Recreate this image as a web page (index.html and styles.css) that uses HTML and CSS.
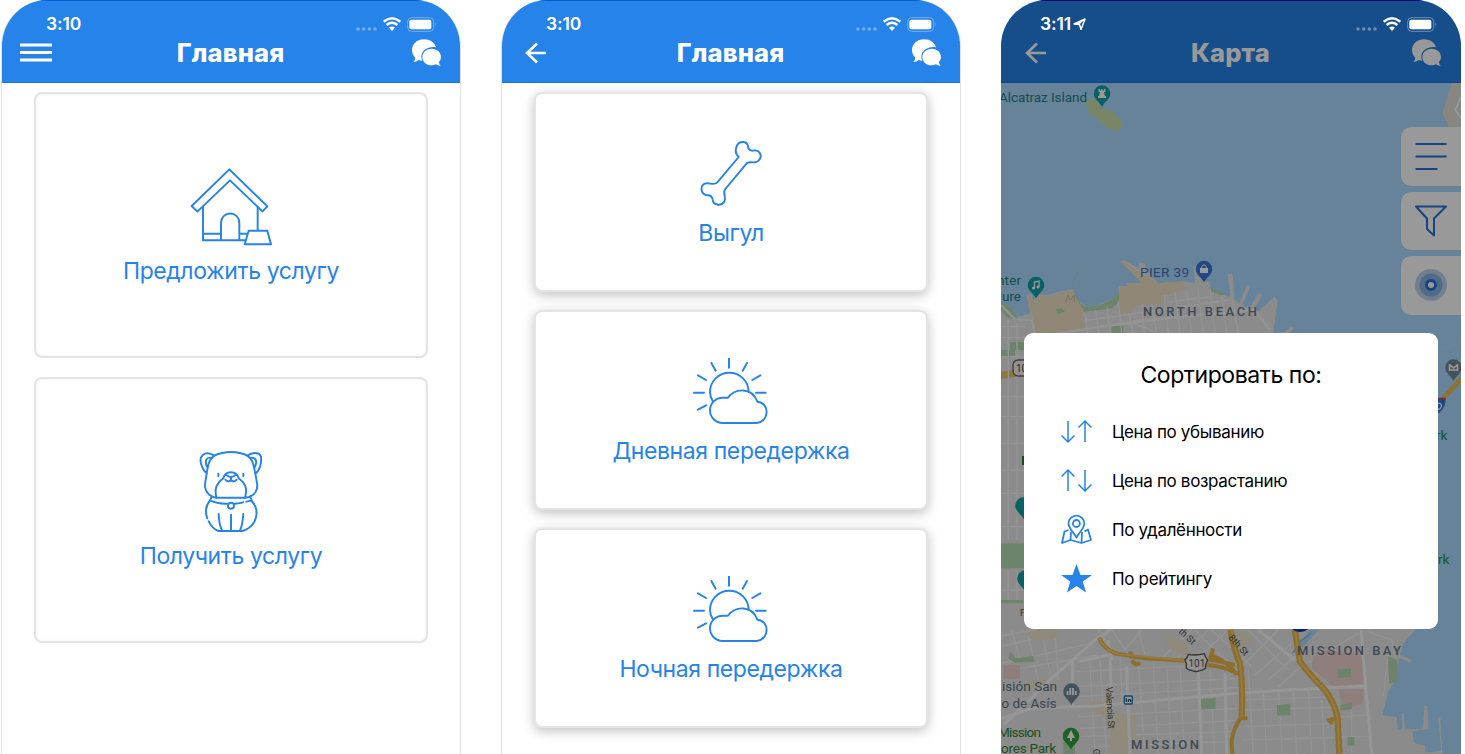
FILE: index.html
```html
<!DOCTYPE html>
<html lang="ru">
<head>
<meta charset="utf-8">
<title>Главная</title>
<link rel="stylesheet" href="styles.css">
</head>
<body>
<svg class="defs" width="0" height="0" aria-hidden="true">
  <symbol id="signal" viewBox="1065 45 246 48">
    <g opacity=".35"><circle cx="1074" cy="84" r="5.5"/><circle cx="1091" cy="84" r="5.5"/><circle cx="1108" cy="84" r="5.5"/><circle cx="1125" cy="84" r="5.5"/></g>
    <g fill="none" stroke="#fff" stroke-width="7.5"><path d="M1151 62Q1176 42 1201 62"/><path d="M1160 72Q1176 59 1192 72"/></g>
    <path d="M1167 80Q1176 73 1185 80L1176 90Z"/>
    <rect x="1223" y="50" width="78" height="41" rx="12" fill="none" stroke="#fff" stroke-opacity=".35" stroke-width="3"/>
    <rect x="1228" y="56" width="66" height="29" rx="6"/>
    <path d="M1305 64Q1310 70 1305 77Z" opacity=".5"/>
  </symbol>
  <symbol id="chat" viewBox="1230 110 100 95">
    <path d="M1272 117C1291 117 1304 127 1308 141C1286 137 1266 149 1264 167C1264 173 1265 177 1267 181Q1262 181 1256 179Q1250 185 1240 185Q1246 179 1246 172Q1236 163 1236 150C1236 131 1252 117 1272 117Z"/>
    <path d="M1295 145C1311 145 1323 156 1323 169Q1323 178 1317 185Q1317 191 1322 196Q1314 197 1308 192Q1302 195 1295 195C1279 195 1267 184 1267 170C1267 156 1279 145 1295 145Z"/>
  </symbol>
  <symbol id="back" viewBox="0 0 22 22"><path d="M21 11H2M12 1.5L2 11L12 20.5" fill="none" stroke="#fff" stroke-width="2.6"/></symbol>
  <symbol id="sun" viewBox="273 39 240 204">
    <path d="M387 40V68M334 54L347 77M441 54L428 77M294 91L318 105M481 91L457 105M282 143H312M468 143H497M294 194L318 181"/>
    <path d="M338 168Q330 155 330 141A58 58 0 0 1 446 141"/>
    <path d="M368 234A38 38 0 0 1 368 158H384C404 130 456 124 472 170C509 172 510 230 470 234Z"/>
  </symbol>
</svg>

<main class="screens">
  <section class="phone">
    <header class="header">
      <div class="status"><span class="time">3:10</span><svg class="signal"><use href="#signal"/></svg></div>
      <div class="nav">
        <svg class="menu" viewBox="0 0 32 20"><path d="M0 2H32M0 9.5H32M0 17H32" stroke="#fff" stroke-width="3"/></svg>
        <h1>Главная</h1>
        <svg class="chat"><use href="#chat"/></svg>
      </div>
    </header>
    <div class="cards">
      <article class="card tall">
        <svg class="icon" viewBox="54 51 258 240">
          <path d="M65 168L178 58L292 169L277 184L180 91L82 185Z"/>
          <path d="M99 172V271H153V218A27.500 27.500 0 0 1 208 218V271H224M99 251H153M208 251H230M263 172V241M153 271H208M236 242H292L303 283H224Z"/>
        </svg>
        <p>Предложить услугу</p>
      </article>
      <article class="card tall">
        <svg class="icon" viewBox="54 51 258 240">
          <path d="M133 62C105 45 82 62 96 95Q101 108 110 115C108 135 104 143 105 155C108 178 127 187 139 188H225C250 185 262 170 262 151Q260 138 256 116C270 106 275 83 273 65C267 49 243 53 232 62Q210 51 183 51Q155 51 133 62Z"/>
          <path d="M127 69C107 64 104 78 111 96M239 69C260 64 262 82 254 97M133 62C116 73 114 92 110 115M232 62C250 74 251 93 256 116"/>
          <path d="M139 188C132 157 142 143 160 130Q164 112 183 112Q201 112 206 130C224 143 234 157 225 188M168 119Q183 133 198 119M183 126V133M166 134Q175 144 183 135Q191 144 200 134M145 116V124M220 116V124"/>
          <path d="M125 185L120 197Q143 207 171 206M194 206Q211 205 220 202M229 200L245 196L240 184"/><circle cx="183" cy="212" r="9"/>
          <path d="M120 197C108 211 105 231 112 250M116 259Q127 281 145 288H218C265 273 269 222 245 198M146 237Q147 270 157 288M183 239V288M220 237Q217 275 209 288"/>
        </svg>
        <p>Получить услугу</p>
      </article>
    </div>
  </section>

  <section class="phone">
    <header class="header">
      <div class="status"><span class="time">3:10</span><svg class="signal"><use href="#signal"/></svg></div>
      <div class="nav">
        <svg class="back"><use href="#back"/></svg>
        <h1>Главная</h1>
        <svg class="chat"><use href="#chat"/></svg>
      </div>
    </header>
    <div class="cards">
      <article class="card short">
        <svg class="icon" viewBox="33 60 240 204"><path d="M176 111C169 104 165 93 169 82C173 62 201 60 204 79Q205 91 218 92C238 87 248 106 238 119C228 134 211 122 200 130L136 207C126 219 141 233 133 245C121 262 99 253 98 239Q95 225 82 226C60 222 59 196 77 190C90 187 101 198 112 187Z"/></svg>
        <p>Выгул</p>
      </article>
      <article class="card short"><svg class="icon"><use href="#sun"/></svg><p>Дневная передержка</p></article>
      <article class="card short"><svg class="icon"><use href="#sun"/></svg><p>Ночная передержка</p></article>
    </div>
  </section>

  <section class="phone map-phone">
    <header class="header">
      <div class="status"><span class="time">3:11</span><svg class="locate" viewBox="0 0 13 12"><path d="M1 6L12 1L8 11.500L6.500 6.500Z" fill="none" stroke="#fff" stroke-width="1.500" stroke-linejoin="round"/><path d="M1 6L12 1L6.500 6.500Z"/></svg><svg class="signal"><use href="#signal"/></svg></div>
      <div class="nav">
        <svg class="back"><use href="#back"/></svg>
        <h1>Карта</h1>
        <svg class="chat"><use href="#chat"/></svg>
      </div>
    </header>
    <div class="map">
      <svg class="map-art" viewBox="1001 83 460 671">
        <defs>
          <path id="pin" d="M0 22C-2 17-8.300 14.500-8.300 8.500A8.300 8.300 0 1 1 8.300 8.500C8.300 14.500 2 17 0 22Z"/>
        </defs>
        <rect x="1001" y="83" width="460" height="671" fill="#aadaff"/>
        <g transform="scale(.33333)">
          <!-- Alcatraz and Treasure Island -->
          <g transform="translate(2985 0)">
            <path d="M270 300L300 298L320 325L350 332L382 366L380 386L360 394L335 382L305 358L302 345L285 348Z" fill="#cadfaa"/>
            <path d="M1371 248H1398V382H1362L1342 340Z" fill="#e4dfd8"/><path d="M1398 290L1381 330L1398 355" fill="none" stroke="#fff" stroke-width="5"/>
          </g>
          <!-- northern shore -->
          <g transform="translate(2985 720)">
            <path d="M18 188L40 195L68 230L105 220L95 165L122 158L160 165L190 155L235 148L240 170Q265 200 290 200Q335 190 372 160V138L398 138L392 130L440 128L378 65L388 60L430 85L432 68L448 70L470 110L490 130L565 124L600 128L595 80L608 76L625 122L645 126V144L700 170L706 166L698 102L713 102L718 178L733 190L756 135L766 138L742 195L762 205L792 160L802 164L778 208L790 214L838 170L848 180L835 280L870 275L890 259L897 266L850 310H840V1170H18Z" fill="#e8e8e8"/>
            <path d="M18 188L40 195L68 230L62 240L35 232L18 210ZM240 170Q225 130 245 100Q262 80 290 82Q254 83 242 110Q230 140 243 170Q250 190 275 200Q330 200 372 158L374 185L350 205L268 216ZM640 140L690 160L680 168L645 152ZM350 258H385V280H350ZM45 306H90V330H45Z" fill="#b5dbb5"/>
            <path d="M98 168L120 158L160 167L235 148L245 180L262 205L270 268L215 270L150 285L112 290L115 222L104 215ZM373 165L370 138L398 138L392 130L440 128L380 67L390 62L430 95L490 130L565 124L570 150L510 165L505 190L420 196L415 220L370 220Z" fill="#f1e2c6"/>
            <path d="M182 207L200 204L210 214L190 224Z" fill="#b5dbb5"/>
            <path d="M212 187L218 165L226 180L238 166V186" fill="none" stroke="#cbbf9e" stroke-width="3"/>
            <path d="M120 160L122 150L150 138L155 165ZM112 180L130 170V158H110Z" fill="#aadaff"/>
            <g fill="none" stroke="#f5f5f5" stroke-width="4"><path d="M278 280L270 220M312 280L302 210M346 280L336 200M380 280L370 185M414 280L402 220M448 275L440 190M485 280L470 190M520 280L508 165M555 280L540 155M590 280L575 150M625 280L608 145M660 280L645 145M695 280L680 165M730 280L712 178M270 242L700 180M268 268L760 205M520 186L650 170M405 245L480 275"/><path d="M18 195L60 238L112 242L118 280M118 292L430 242L780 210L825 270" stroke-width="7"/></g>
            <path d="M18 235L110 245V1140H18Z" fill="#e8e8e8"/>
            <path d="M45 306H88V330H45ZM18 330H60V350H18ZM18 910H88V985H18ZM18 1080H70V1110H18Z" fill="#b5dbb5"/>
            <path d="M18 395L90 385V405L18 418Z" fill="#efc868"/>
            <g stroke="#f8f8f8" stroke-width="4"><path d="M18 260H90M18 292H90M18 350H90M18 470H90M18 530H90M18 610H90M18 690H90M18 760H90M18 860H90M18 1050H90M40 240V900M66 250V900M40 990V1140M66 990V1140"/></g>
          </g>
          <!-- southern districts -->
          <g transform="translate(2985 1800)">
            <path d="M18 0H1325L1262 88L1225 130L1205 200L1195 250L1178 280L1162 345L1205 352L1208 390L1222 388L1220 340L1226 338L1230 388L1284 386L1288 318L1298 318L1300 388L1252 394L1258 430L1290 435V458L1338 452L1330 352L1336 352L1342 462H18Z" fill="#e8e8e8"/>
            <path d="M1205 160L1250 180L1245 188L1200 168Z" fill="#e8e8e8"/>
            <g fill="none" stroke="#f6f6f6" stroke-width="4">
              <path d="M20 108L130 88M20 138L155 110M20 190L290 130M20 215L310 165M250 215L730 190M240 260L735 235M250 290L740 262M250 350L725 325M255 385L720 362M255 410L710 395M300 440L700 425M750 300L1020 290M750 330L1020 322M745 380L1020 370M740 420L1120 410M1040 350L1120 345"/>
              <path d="M50 90L75 180M95 90L130 240M140 90L165 220M180 90L190 240M285 190L300 462M315 180L335 462M375 170L390 462M430 190L448 440M475 190L490 462M515 195L530 462M555 200L568 462M645 210L658 462M760 210L775 462M805 275L815 462M850 270L862 462M895 275L905 462M940 270L950 462M980 300L990 462M1070 265V462"/>
              <path d="M310 90L350 150M350 90L410 175M390 150L440 90M430 90L450 165M500 175L590 90M540 180L640 90M580 200L700 90M740 200L850 90M780 225L890 130M820 240L905 165M850 260L930 190M600 90L720 210M650 90L770 200M760 90L880 210"/>
              <path d="M935 190L1090 100M960 230L1000 145M1120 95L1190 120L1200 170M1180 165L1165 290"/>
            </g>
            <path d="M88 100L125 90L185 85L190 115L120 125ZM285 305L345 308L350 335L420 345L425 420L410 462H345L345 370L310 340L285 330ZM500 112L545 108L580 145L590 170L535 155ZM720 95L765 100L770 130L735 135ZM90 245L150 235L160 260H90Z" fill="#f1e7cf"/>
            <path d="M25 195H75V238H25ZM955 168L1000 150L1110 165V250L1020 262L950 205ZM1030 268H1105V310L1045 330Z" fill="#f1d2d1"/>
            <path d="M18 0H85V10H18ZM45 152L60 175L115 168L118 185L60 188L40 175ZM618 298L662 294V326L618 328ZM846 315L886 312V345L846 347ZM1028 208L1068 205V232L1028 234ZM1036 314L1071 310V328L1036 330ZM1058 411H1078V437H1058ZM1178 168L1206 180V245L1183 250ZM205 410H240V462H205Z" fill="#b5dbb5"/>
            <g fill="none" stroke="#fafafa" stroke-width="9"><path d="M25 375L170 235L300 120L345 90M20 355L110 325L300 318L740 278L1108 258M1098 90L1112 260L1130 462M232 180V325M250 185L340 165M345 180L350 330M395 200L405 462M610 210L620 462M690 220L695 462M340 120L350 180M790 90L900 180"/></g>
            <path d="M908 135L945 90H970L925 140Z" fill="#aadaff"/>
            <path d="M893 160L915 125L950 98" fill="none" stroke="#8ec2ec" stroke-width="5"/>
            <g fill="none" stroke="#e9b94d"><path d="M312 113Q330 155 375 163L450 175L575 182L640 195Q685 198 730 222M405 154L412 175M412 180Q420 200 435 188M645 175L655 145M650 165Q705 190 725 225M735 190Q745 270 740 350Q715 385 710 420L712 462M735 355H757M720 195L640 178M1028 355L1003 360L1012 372" stroke-width="12"/><path d="M706 90Q720 160 735 190Q745 270 740 350M900 90L915 185Q940 220 990 270Q1020 310 1028 355L1033 462" stroke-width="19"/><path d="M312 113Q330 155 375 163L575 182L640 195M710 90Q722 160 735 190Q745 270 740 350M900 90L915 185Q940 220 990 270Q1020 310 1028 355L1033 462" stroke="#fbd06d" stroke-width="5"/></g>
            <circle cx="915" cy="62" r="34" fill="#1c2fbf"/>
            <path d="M580 163Q603 168 628 161Q630 172 638 180Q630 195 632 205Q622 212 603 215Q582 211 574 205Q577 193 570 180Q578 172 580 163Z" fill="#f4f4f4" stroke="#555" stroke-width="4"/>
            <rect x="388" y="288" width="24" height="24" rx="3" fill="#fff" stroke="#1877b8" stroke-width="4"/><path d="M394 306V294M400 306V299H407V306" stroke="#123" stroke-width="3" fill="none"/>
          </g>
          <!-- bridge approach -->
          <g transform="translate(4200 990)"><path d="M118 58L183 40" stroke="#c5dce9" stroke-width="3"/><path d="M125 210L184 146" stroke="#e9bf58" stroke-width="15"/><path d="M108 202H138Q142 230 118 250H108Z" fill="#3577de" stroke="#ddd" stroke-width="3"/><path d="M113 206H138" stroke="#b45055" stroke-width="6"/><path d="M112 220Q126 218 124 230Q121 240 112 237" fill="none" stroke="#fff" stroke-width="4"/></g>
        </g>
        <use href="#pin" transform="translate(1102 85)" fill="#12a2a5"/><path d="M1098.500 89H1100V90.500H1101.300V89H1102.700V90.500H1104V89H1105.500V92H1104L1105 96H1106V98H1098V96H1099L1100 92H1098.500Z" fill="#fff"/>
        <use href="#pin" transform="translate(1036 276.500)" fill="#12a2a5"/><path d="M1034.500 288V282L1039 281V287" fill="none" stroke="#fff" stroke-width="1.300"/><circle cx="1033.500" cy="288" r="1.500" fill="#fff"/><circle cx="1038" cy="287" r="1.500" fill="#fff"/>
        <use href="#pin" transform="translate(1204 260.500)" fill="#3879dc"/><path d="M1200 268H1208V273H1200Z" fill="#fff"/><path d="M1201.800 268V266.500Q1204 263 1206.200 266.500V268" fill="none" stroke="#fff"/>
        <use href="#pin" transform="translate(1071.500 683)" fill="#71899a"/><path d="M1067.500 695V691M1070.300 695V688M1073 695V688M1075.700 695V691" stroke="#fff" stroke-width="1.800"/>
        <use href="#pin" transform="translate(1071 727.500)" fill="#34a142"/><path d="M1071 730L1075 738H1072V741H1070V738H1067Z" fill="#fff"/>
        <use href="#pin" transform="translate(1453.500 359)" fill="#71899a"/><path d="M1449.500 371V364M1457.500 371V364M1449.500 370H1457.500M1450 365L1453.500 368L1457 365" stroke="#fff" stroke-width="1.500" fill="none"/>
        <use href="#pin" transform="translate(1023.500 497)" fill="#12a2a5"/><use href="#pin" transform="translate(1025.500 570)" fill="#12a2a5"/>
        <rect x="1013" y="360" width="20" height="16" rx="5" fill="#f4f4f4" stroke="#666" stroke-width="1.300"/><text x="1016" y="372" font-size="10" fill="#444">10</text>
        <path d="M1023 456V465" stroke="#287a3c" stroke-width="2"/>
        <g class="poi">
          <text x="999" y="102" textLength="88" fill="#1b8484">Alcatraz Island</text>
          <text x="997" y="285" textLength="24" fill="#1b8484">nter</text><text x="1002" y="301" textLength="19" fill="#1b8484">ure</text>
          <text x="1140" y="276.500" textLength="49" fill="#4372c0">PIER 39</text>
          <text x="1002" y="691" textLength="55" fill="#5f7481">isión San</text><text x="1001.500" y="708" textLength="55" fill="#5f7481">o de Asís</text>
          <text x="998" y="737" textLength="43" fill="#2d8a39">Mission</text><text x="1001" y="753" textLength="55" fill="#2d8a39">ores Park</text>
          <text x="1436" y="440" fill="#2d8a39">rk</text><text x="1438" y="564" fill="#2d8a39">rk</text>
        </g>
        <g class="area"><text x="1143" y="316" textLength="114">NORTH BEACH</text><text x="1297" y="655" textLength="104">MISSION BAY</text><text x="1131" y="749" textLength="68">MISSION</text></g>
        <g class="street"><text x="1188.500" y="667" font-size="10">101</text><text transform="translate(1178 632) rotate(43)">th St</text><text transform="translate(1228 638) rotate(48)">8th St</text><text transform="translate(1106 687) rotate(87)" textLength="42">Valencia St</text><text transform="translate(1093 749) rotate(87)">G</text><text x="1020" y="616">F</text></g>
      </svg>
      <div class="tools">
        <div class="tool"><svg viewBox="0 0 34 34"><path d="M1.500 5H32.500M1.500 17.500H32.500M1.500 30H23.500"/></svg></div>
        <div class="tool"><svg viewBox="0 0 34 34"><path d="M2 2.500H32L20 14.500V31.500L13 25V14.500Z"/></svg></div>
        <div class="tool"><svg viewBox="0 0 34 34"><circle cx="17" cy="17" r="16" fill="#2670c9" fill-opacity=".3" stroke="none"/><circle cx="17" cy="17" r="11.500" fill="#2670c9" fill-opacity=".35" stroke="none"/><circle cx="17" cy="17" r="4.500" fill="#fff" stroke-width="3"/></svg></div>
      </div>
    </div>
    <div class="overlay">
      <div class="dialog">
        <h2>Сортировать по:</h2>
        <ul>
          <li><svg viewBox="0 0 32 32"><path d="M8 5V26M1.500 19.500L8 26L14.500 19.500M25 26V5M18.500 11.500L25 5L31.500 11.500"/></svg><span>Цена по убыванию</span></li>
          <li><svg viewBox="0 0 32 32"><path d="M8 26V5M1.500 11.500L8 5L14.500 11.500M25 5V26M18.500 19.500L25 26L31.500 19.500"/></svg><span>Цена по возрастанию</span></li>
          <li><svg viewBox="0 0 32 32"><path class="bold" d="M16.500 23.500C12.500 17 8.500 14 8.500 9.500A7.900 7.900 0 0 1 24.300 9.500C24.300 14 20.500 17 16.500 23.500Z"/><circle class="bold" cx="16.400" cy="9.500" r="3.500"/><path class="bold" d="M8.500 16L4.500 17.500L2 29L10.500 26L21.500 29L31 26L28 15.500L24.500 17.500M10.500 26L11 18M21.500 29L22 18"/></svg><span>По удалённости</span></li>
          <li><svg viewBox="0 0 32 32"><path d="M16.500 1L20.500 12H32L22.800 18.500L26 29.500L16.500 23L7 29.500L10.200 18.500L1 12H12.500Z" fill="#2683e9" stroke="none"/></svg><span>По рейтингу</span></li>
        </ul>
      </div>
    </div>
  </section>
</main>
</body>
</html>
```

FILE: styles.css
```css
* { box-sizing: border-box; }
body { margin: 0; background: #fff; overflow: hidden; font-family: Inter, "Liberation Sans", sans-serif; }
h1, h2, p, ul { margin: 0; padding: 0; }
svg { display: block; flex: none; fill: #fff; }
.defs { position: absolute; }
.screens { display: flex; gap: 40px; padding-left: 1px; width: 1465px; height: 754px; }
.phone { display: flex; flex-direction: column; flex: none; width: 460px; height: 754px; border: solid #e2e2e4; border-width: 0 1px; border-radius: 46px 46px 0 0; overflow: hidden; background: #fff; }
.header { flex: none; height: 83px; margin: 0 -1px; background: #2683e9; border-top: 1px solid #0760d2; border-bottom: 1px solid #1a76df; }
.status { display: flex; align-items: center; height: 36px; padding: 9px 24px 0 45px; color: #fff; }
.time { font-size: 17.500px; font-weight: 600; line-height: 20px; letter-spacing: -.1px; }
.signal { width: 82px; height: 16px; margin-left: auto; }
.nav { display: grid; grid-template-columns: 1fr auto 1fr; align-items: center; height: 32px; padding: 0 18px 0 19px; }
.nav h1 { color: #fff; font-size: 25.500px; line-height: 32px; font-weight: 800; letter-spacing: .15px; margin-left: -2px; }
.menu { width: 32px; height: 20px; }
.back { width: 22px; height: 22px; margin-left: 5px; }
.chat { width: 33.300px; height: 31.700px; justify-self: end; }
.cards { display: flex; flex-direction: column; padding: 9px 32px 0; gap: 19px; }
.card { display: flex; flex-direction: column; align-items: center; flex: none; border: 2px solid #e4e4e4; border-radius: 8px; background: #fff; color: #2683e9; }
.card p { font-size: 23px; line-height: 28px; white-space: nowrap; letter-spacing: -.4px; }
.card .icon { fill: none; stroke: #2683e9; stroke-width: 5.8; overflow: visible; stroke-linecap: round; stroke-linejoin: round; }
.tall { height: 266px; padding-top: 73px; gap: 10px; box-shadow: inset 0 0 3px rgba(0,0,0,.06); }
.tall .icon { width: 86px; height: 80px; }
.short { height: 200px; padding-top: 46px; gap: 11px; box-shadow: 0 3px 12px rgba(0,0,0,.25); }
.short .icon { width: 80px; height: 68px; }
.short + .short { margin-top: -1px; }

.map-phone { position: relative; border: 0; }
.map-phone .header { margin: 0; border-top-color: #0000b0; }
.map-phone .status { position: relative; z-index: 3; padding-left: 39px; }
.locate { width: 13px; height: 12px; margin-left: 2px; }
.map { position: relative; height: 671px; }
.map-art { width: 460px; height: 671px; }
.map-art text { font-family: Roboto, sans-serif; }
.poi { font-size: 13.500px; font-weight: 400; }
.area { font-size: 13px; font-weight: 500; fill: #68788a; }
.street { font-size: 9.5px; fill: #555; }
.tools { position: absolute; top: 44px; right: 0; display: grid; gap: 6px; }
.tool { display: flex; align-items: center; width: 60px; height: 58.500px; padding-left: 13px; border-radius: 10px 0 0 10px; background: #fff; }
.tool svg { width: 34px; height: 34px; fill: none; stroke: #2672d9; stroke-width: 2; stroke-linejoin: round; }
.overlay { position: absolute; inset: 0; z-index: 2; padding: 333px 23px 0; background: rgba(0,0,0,.4); }
.dialog { height: 296px; padding: 26px 36px 0; border-radius: 9px; background: #fff; color: #000; }
.dialog h2 { font-size: 23px; line-height: 32px; font-weight: 400; text-align: center; letter-spacing: -.43px; }
.dialog ul { display: grid; gap: 17px; padding-top: 25px; list-style: none; }
.dialog li { display: flex; align-items: center; gap: 20px; height: 32px; font-size: 17px; line-height: 32px; letter-spacing: -.33px; white-space: nowrap; }
.dialog li svg { width: 32px; height: 32px; fill: none; stroke: #2683e9; stroke-width: 1.500; }
.dialog .bold { stroke-width: 1.800; stroke-linejoin: round; }
```
